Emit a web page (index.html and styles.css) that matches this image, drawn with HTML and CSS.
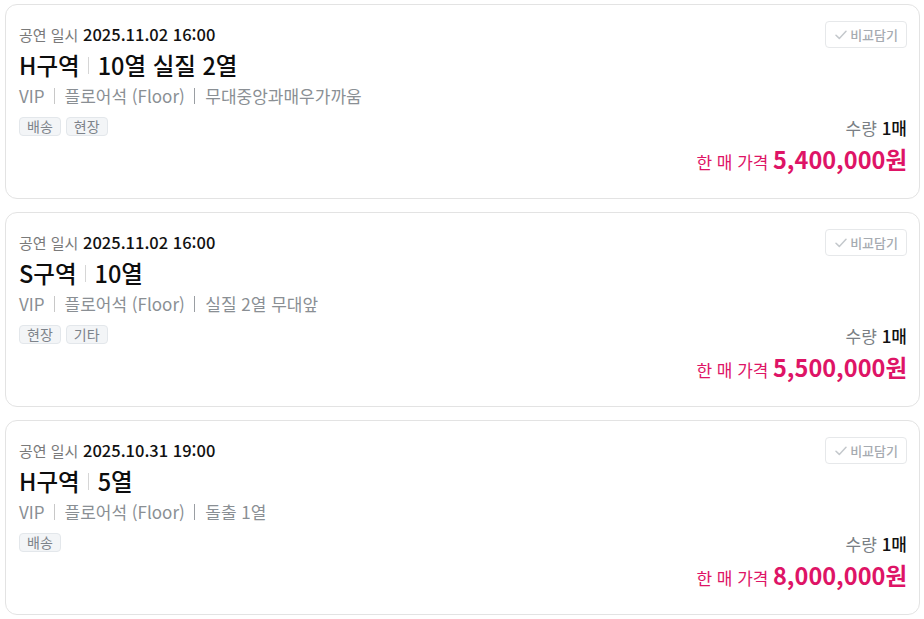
FILE: index.html
```html
<!DOCTYPE html>
<html lang="ko">
<head>
<meta charset="utf-8">
<link rel="stylesheet" href="styles.css">
</head>
<body>
<div class="list">
  <div class="card">
    <div class="info">
      <div class="date"><span class="label">공연 일시</span> <span class="value">2025.11.02 16:00</span></div>
      <div class="title"><span>H구역</span><i class="tsep"></i><span>10열 실질 2열</span></div>
      <div class="sub"><span>VIP</span><i class="ssep"></i><span>플로어석 (Floor)</span><i class="ssep dark"></i><span>무대중앙과매우가까움</span></div>
      <div class="tags"><span class="tag">배송</span><span class="tag">현장</span></div>
    </div>
    <div class="side">
      <button class="compare"><svg width="12" height="10" viewBox="0 0 12 10"><path d="M1 5.2 L4.3 8.4 L11 1.2" fill="none" stroke="#c4c8cc" stroke-width="1.5" stroke-linecap="round" stroke-linejoin="round"/></svg>비교담기</button>
      <div class="qty"><span class="qlabel">수량</span> <span class="qval">1매</span></div>
      <div class="price"><span class="plabel">한 매 가격</span> <span class="pval">5,400,000원</span></div>
    </div>
  </div>
  <div class="card">
    <div class="info">
      <div class="date"><span class="label">공연 일시</span> <span class="value">2025.11.02 16:00</span></div>
      <div class="title"><span>S구역</span><i class="tsep"></i><span>10열</span></div>
      <div class="sub"><span>VIP</span><i class="ssep"></i><span>플로어석 (Floor)</span><i class="ssep dark"></i><span>실질 2열 무대앞</span></div>
      <div class="tags"><span class="tag">현장</span><span class="tag">기타</span></div>
    </div>
    <div class="side">
      <button class="compare"><svg width="12" height="10" viewBox="0 0 12 10"><path d="M1 5.2 L4.3 8.4 L11 1.2" fill="none" stroke="#c4c8cc" stroke-width="1.5" stroke-linecap="round" stroke-linejoin="round"/></svg>비교담기</button>
      <div class="qty"><span class="qlabel">수량</span> <span class="qval">1매</span></div>
      <div class="price"><span class="plabel">한 매 가격</span> <span class="pval">5,500,000원</span></div>
    </div>
  </div>
  <div class="card">
    <div class="info">
      <div class="date"><span class="label">공연 일시</span> <span class="value">2025.10.31 19:00</span></div>
      <div class="title"><span>H구역</span><i class="tsep"></i><span>5열</span></div>
      <div class="sub"><span>VIP</span><i class="ssep"></i><span>플로어석 (Floor)</span><i class="ssep dark"></i><span>돌출 1열</span></div>
      <div class="tags"><span class="tag">배송</span></div>
    </div>
    <div class="side">
      <button class="compare"><svg width="12" height="10" viewBox="0 0 12 10"><path d="M1 5.2 L4.3 8.4 L11 1.2" fill="none" stroke="#c4c8cc" stroke-width="1.5" stroke-linecap="round" stroke-linejoin="round"/></svg>비교담기</button>
      <div class="qty"><span class="qlabel">수량</span> <span class="qval">1매</span></div>
      <div class="price"><span class="plabel">한 매 가격</span> <span class="pval">8,000,000원</span></div>
    </div>
  </div>
</div>
</body>
</html>
```
FILE: styles.css
```css
* { box-sizing: border-box; }
html, body { margin: 0; padding: 0; background: #fff; }
body {
  font-family: "Noto Sans CJK KR", "Noto Sans", sans-serif;
  color: #111;
}
.list {
  display: flex;
  flex-direction: column;
  gap: 13px;
  padding: 4px 4px 0 5px;
}
.card {
  display: flex;
  justify-content: space-between;
  height: 195px;
  border: 1px solid #e3e3e3;
  border-radius: 12px;
  padding: 19px 12px 20px 13px;
}
.info { display: flex; flex-direction: column; }
.date { font-size: 16.5px; line-height: 20px; }
.date .label { color: #7a7a7a; font-size: 15px; }
.date .value { color: #111; font-weight: 500; }
.title {
  display: flex;
  align-items: center;
  margin-top: 4px;
  font-size: 23.5px;
  line-height: 32px;
  font-weight: 500;
  color: #0d0d0d;
}
.tsep {
  display: inline-block;
  width: 1px;
  height: 17px;
  background: #d6d6d6;
  margin: 0 9px 0 8px;
}
.sub {
  display: flex;
  align-items: center;
  margin-top: 4px;
  font-size: 17px;
  line-height: 22px;
  color: #8a8f94;
}
.ssep {
  display: inline-block;
  width: 1px;
  height: 16px;
  background: #c8c8c8;
  margin: 0 10px 0 9px;
}
.ssep.dark { background: #9a9ea3; width: 1.5px; }
.tags { display: flex; gap: 5px; margin-top: 10px; }
.tag {
  display: inline-block;
  height: 19px;
  line-height: 17px;
  padding: 0 7px;
  font-size: 14px;
  color: #7d838a;
  background: #f3f5f7;
  border: 1px solid #e3e7eb;
  border-radius: 4px;
}
.side {
  display: flex;
  flex-direction: column;
  align-items: flex-end;
}
.compare {
  display: flex;
  align-items: center;
  gap: 3px;
  height: 27px;
  margin-top: -3px;
  padding: 0 8px 0 9px;
  font-family: inherit;
  font-size: 13px;
  font-weight: 500;
  color: #a6abb1;
  background: #fff;
  border: 1px solid #e6e8ea;
  border-radius: 4px;
}
.qty {
  margin-top: auto;
  font-size: 17px;
  line-height: 22px;
}
.qlabel { color: #7a7f85; }
.qval { color: #111; font-weight: 500; }
.price {
  margin-top: 4px;
  line-height: 32px;
  color: #de1466;
}
.plabel { font-size: 17px; }
.pval { font-size: 23.5px; font-weight: 700; }
```
